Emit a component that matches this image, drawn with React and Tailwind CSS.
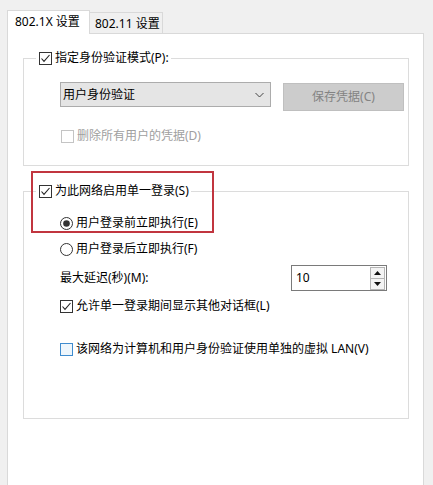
import React from "react";

const font = "font-['Noto_Sans','Noto_Sans_CJK_SC',sans-serif]";

const CheckBox = ({ checked, variant }) => {
  let border = "#333333";
  let fill = "#ffffff";
  if (variant === "disabled") {
    border = "#c4c4c4";
  }
  if (variant === "focus") {
    border = "#3f8ccf";
    fill = "#eef6fc";
  }
  return (
    <svg width="13" height="13" viewBox="0 0 13 13" className="shrink-0">
      <rect x="0.5" y="0.5" width="12" height="12" fill={fill} stroke={border} />
      {checked && (
        <path d="M2.5 6.5 L5 9.3 L10.5 3" fill="none" stroke="#222" strokeWidth="1.1" />
      )}
    </svg>
  );
};

const Radio = ({ checked }) => (
  <svg width="13" height="13" viewBox="0 0 13 13" className="shrink-0">
    <circle cx="6.5" cy="6.5" r="6" fill="#fff" stroke="#333" />
    {checked && <circle cx="6.5" cy="6.5" r="3.3" fill="#333" />}
  </svg>
);

const Row = ({ children, className = "" }) => (
  <div className={`flex items-center gap-[3px] h-[16px] leading-[16px] ${className}`}>
    {children}
  </div>
);

export default function App() {
  return (
    <div
      className={`relative w-[433px] h-[485px] overflow-hidden bg-[#f0f0f0] text-[12px] text-black ${font}`}
    >
      {/* tabs */}
      <div className="flex items-end pl-[7px] pt-[10px]">
        <div className="relative z-10 -mb-px h-[24px] w-[83px] border-l border-t border-r border-[#d9d9d9] bg-white pl-[7px] pt-[3px] leading-[16px]">
          802.1X 设置
        </div>
        <div className="h-[21px] w-[73px] border-t border-r border-[#d9d9d9] bg-[#f0f0f0] pl-[5px] pt-[3px] leading-[16px]">
          802.11 设置
        </div>
      </div>

      {/* panel */}
      <div className="ml-[7px] h-[460px] w-[417px] border border-[#d9d9d9] bg-white pt-[16px]">
        <fieldset className="ml-[15px] h-[116px] w-[386px] border border-[#dcdcdc]">
          <legend className="ml-[12px] pl-[3px] pr-[2px]">
            <Row>
              <CheckBox checked />
              <span>指定身份验证模式(P):</span>
            </Row>
          </legend>
          <div className="mt-[16px] ml-[36px] flex items-start">
            <div className="flex h-[25px] w-[211px] items-center justify-between border border-[#acacac] bg-[#e5e5e5] pl-[2px] pr-[6px]">
              <span className="leading-[16px]">用户身份验证</span>
              <svg width="9" height="6" viewBox="0 0 9 6">
                <path d="M0.5 1 L4.5 5 L8.5 1" fill="none" stroke="#444" strokeWidth="1" />
              </svg>
            </div>
            <div className="ml-[12px] mt-[1px] flex h-[28px] w-[121px] items-center justify-center border border-[#bfbfbf] bg-[#cccccc] text-[#838383]">
              保存凭据(C)
            </div>
          </div>
          <Row className="mt-[17px] ml-[37px] text-[#a0a0a0]">
            <CheckBox variant="disabled" />
            <span>删除所有用户的凭据(D)</span>
          </Row>
        </fieldset>

        <fieldset className="mt-[17px] ml-[15px] h-[236px] w-[386px] border border-[#dcdcdc]">
          <legend className="ml-[12px] pl-[3px] pr-[2px]">
            <Row>
              <CheckBox checked />
              <span>为此网络启用单一登录(S)</span>
            </Row>
          </legend>
          <Row className="mt-[16px] ml-[36px]">
            <Radio checked />
            <span>用户登录前立即执行(E)</span>
          </Row>
          <Row className="mt-[10px] ml-[36px]">
            <Radio />
            <span>用户登录后立即执行(F)</span>
          </Row>
          <div className="mt-[8px] ml-[36px] flex h-[26px] items-center">
            <span className="w-[231px] leading-[16px]">最大延迟(秒)(M):</span>
            <div className="flex h-[26px] w-[96px] items-center justify-between border border-[#7a7a7a] pl-[4px] pr-[1px]">
              <span className="leading-[16px]">10</span>
              <div className="flex flex-col">
                <div className="flex h-[12px] w-[15px] items-center justify-center border border-[#b5b5b5] bg-[#f4f4f4]">
                  <svg width="7" height="4" viewBox="0 0 7 4">
                    <path d="M0 4 L3.5 0 L7 4 Z" fill="#111" />
                  </svg>
                </div>
                <div className="flex h-[11px] w-[15px] items-center justify-center border border-t-0 border-[#b5b5b5] bg-[#f4f4f4]">
                  <svg width="7" height="4" viewBox="0 0 7 4">
                    <path d="M0 0 L3.5 4 L7 0 Z" fill="#111" />
                  </svg>
                </div>
              </div>
            </div>
          </div>
          <Row className="mt-[7px] ml-[36px]">
            <CheckBox checked />
            <span>允许单一登录期间显示其他对话框(L)</span>
          </Row>
          <Row className="mt-[27px] ml-[36px]">
            <CheckBox variant="focus" />
            <span>该网络为计算机和用户身份验证使用单独的虚拟 LAN(V)</span>
          </Row>
        </fieldset>
      </div>

      {/* red highlight annotation */}
      <div className="absolute left-[31px] top-[171px] h-[62px] w-[183px] border-2 border-[#c1353f]" />
    </div>
  );
}
